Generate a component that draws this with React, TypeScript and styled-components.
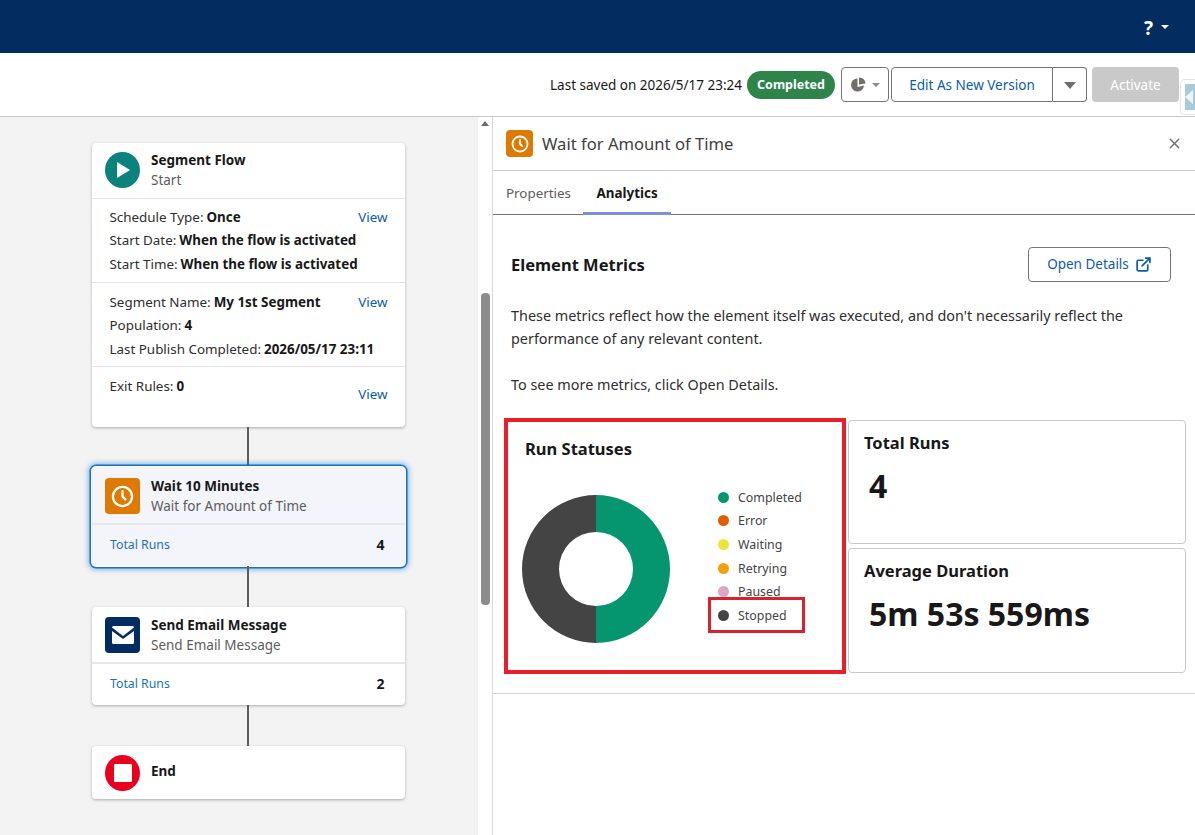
import React from 'react'
import styled, { createGlobalStyle } from 'styled-components'
import { X, ExternalLink } from 'lucide-react'

const Global = createGlobalStyle`
  html, body { margin: 0; padding: 0; background: #fff; }
  body { font-family: "Noto Sans", "Open Sans", Arial, sans-serif; color: #181818; overflow: hidden; }
  *, *::before, *::after { box-sizing: border-box; }
`

const Page = styled.div`
  width: 1195px;
  height: 835px;
  display: flex;
  flex-direction: column;
  overflow: hidden;
  position: relative;
`

const TopBar = styled.div`
  height: 53px;
  background: #032d60;
  display: flex;
  align-items: center;
  justify-content: flex-end;
  padding-right: 26px;
  gap: 8px;
  color: #fff;
`
const Help = styled.span`
  font-size: 19px;
  font-weight: 700;
  margin-top: 3px;
`
const SmallCaret = styled.span<{ $color?: string }>`
  width: 0;
  height: 0;
  border-left: 4px solid transparent;
  border-right: 4px solid transparent;
  border-top: 4px solid ${p => p.$color || '#fff'};
`

const Toolbar = styled.div`
  height: 64px;
  border-bottom: 1px solid #c9c9c9;
  display: flex;
  align-items: center;
  justify-content: flex-end;
  padding: 0 16px 0 0;
`
const Saved = styled.span`
  font-size: 13.5px;
  margin-right: 5px;
  white-space: nowrap;
`
const Badge = styled.span`
  width: 88px;
  height: 28px;
  border-radius: 14px;
  background: #2e844a;
  color: #fff;
  font-size: 12.5px;
  font-weight: 700;
  display: flex;
  align-items: center;
  justify-content: center;
  margin-right: 6px;
`
const OutlineButton = styled.button<{ $w: number; $joinRight?: boolean; $joinLeft?: boolean }>`
  width: ${p => p.$w}px;
  height: 35px;
  background: #fff;
  border: 1px solid #747474;
  border-radius: ${p => (p.$joinRight ? '4px 0 0 4px' : p.$joinLeft ? '0 4px 4px 0' : '4px')};
  ${p => p.$joinLeft && 'border-left: 0;'}
  color: #0b5cab;
  font-family: inherit;
  font-size: 13.5px;
  display: flex;
  align-items: center;
  justify-content: center;
  gap: 6px;
  padding: 0;
`
const ButtonGroup = styled.div`
  display: flex;
  margin: 0 5px 0 2px;
`
const BigCaret = styled.span`
  width: 0;
  height: 0;
  border-left: 6px solid transparent;
  border-right: 6px solid transparent;
  border-top: 7px solid #706e6b;
  margin-top: 2px;
`
const ActivateButton = styled.button`
  width: 87px;
  height: 35px;
  background: #c9c9c9;
  border: 0;
  border-radius: 4px;
  color: #fff;
  font-family: inherit;
  font-size: 13.5px;
  padding: 0;
`
const EdgeHandle = styled.div`
  position: absolute;
  top: 79px;
  right: 0;
  width: 15px;
  height: 36px;
  background: #fff;
  border: 1px solid #e5e5e5;
  border-right: 0;
  border-radius: 5px 0 0 5px;
  padding: 4px 0 4px 4px;
`

const Body = styled.div`
  flex: 1;
  display: flex;
  min-height: 0;
`
const Canvas = styled.div`
  width: 478px;
  background: #f3f3f3;
  padding: 26px 0 0 92px;
  display: flex;
  flex-direction: column;
`
const Card = styled.div<{ $selected?: boolean }>`
  width: 312.5px;
  background: ${p => (p.$selected ? '#f3f5fb' : '#fff')};
  border-radius: 4px;
  box-shadow: ${p =>
    p.$selected
      ? '0 0 0 1px #fff, 0 0 0 2.5px #1b6fc0, 0 0 5px 4px rgba(30,140,230,.5)'
      : '0 1px 3px rgba(0,0,0,.3)'};
`
const CardHead = styled.div<{ $h: number; $pad: number }>`
  display: flex;
  gap: 11px;
  padding: ${p => p.$pad}px 13px 0;
  height: ${p => p.$h}px;
`
const NodeIcon = styled.div<{ $bg: string; $round?: boolean }>`
  width: 35px;
  height: 36px;
  border-radius: ${p => (p.$round ? '50%' : '4px')};
  background: ${p => p.$bg};
  display: flex;
  align-items: center;
  justify-content: center;
  flex: none;
`
const HeadText = styled.div<{ $single?: boolean }>`
  display: flex;
  flex-direction: column;
  gap: 2px;
  margin-top: ${p => (p.$single ? 7 : -1)}px;
`
const NodeTitle = styled.div`
  font-size: 13.5px;
  font-weight: 700;
  line-height: 18px;
  white-space: nowrap;
`
const NodeSub = styled.div`
  font-size: 13.5px;
  line-height: 18px;
  color: #5c5c5c;
  white-space: nowrap;
`
const Section = styled.div<{ $h: number; $pad: number }>`
  border-top: 1px solid #e5e5e5;
  height: ${p => p.$h}px;
  padding: ${p => p.$pad}px 17px 0 17.5px;
  display: flex;
  justify-content: space-between;
`
const Lines = styled.div`
  flex: 1;
  min-width: 0;
  display: flex;
  flex-direction: column;
  gap: 5.5px;
`
const Line = styled.div`
  font-size: 13.4px;
  line-height: 18px;
  color: #2e2e2e;
  white-space: nowrap;
  b {
    color: #181818;
    margin-left: 3px;
  }
`
const ViewLink = styled.a<{ $offset?: number }>`
  flex: none;
  font-size: 13.4px;
  line-height: 18px;
  color: #0b5cab;
  margin-top: ${p => p.$offset || 0}px;
`
const Connector = styled.div<{ $h: number }>`
  width: 2px;
  height: ${p => p.$h}px;
  background: #5c5c5c;
  margin-left: 155px;
`
const RunsRow = styled.div`
  border-top: 2px solid #e8e8e8;
  height: 43px;
  padding: 0 20px 2px 18px;
  display: flex;
  align-items: center;
  justify-content: space-between;
`
const RunsLink = styled.a`
  font-size: 12.3px;
  color: #1b72b8;
`
const RunsCount = styled.b`
  font-size: 14px;
`

const ScrollTrack = styled.div`
  width: 14px;
  background: #fff;
  padding: 4px 3px 0;
  display: flex;
  flex-direction: column;
  align-items: center;
`
const ScrollUp = styled.span`
  width: 0;
  height: 0;
  border-left: 4px solid transparent;
  border-right: 4px solid transparent;
  border-bottom: 5px solid #6b6b6b;
  margin-bottom: 167px;
`
const ScrollThumb = styled.div`
  width: 9px;
  height: 312px;
  background: #8c8c8c;
  border-radius: 4px;
  flex: none;
`

const Panel = styled.div`
  flex: 1;
  border-left: 1px solid #d8d8d8;
  display: flex;
  flex-direction: column;
`
const PanelHead = styled.div`
  height: 54px;
  border-bottom: 1px solid #c9c9c9;
  display: flex;
  align-items: center;
  padding: 0 12px 0 13px;
  gap: 9px;
`
const PanelIcon = styled.div`
  width: 27px;
  height: 27px;
  border-radius: 4px;
  background: #dd7a01;
  display: flex;
  align-items: center;
  justify-content: center;
`
const PanelTitle = styled.h2`
  flex: 1;
  margin: 0;
  font-size: 16.6px;
  font-weight: 400;
  color: #3e3e3c;
`
const Tabs = styled.div`
  height: 44px;
  border-bottom: 1px solid #747474;
  display: flex;
  padding-left: 1px;
`
const Tab = styled.div<{ $active?: boolean }>`
  height: 44px;
  padding: 0 ${p => (p.$active ? 13.5 : 12)}px;
  display: flex;
  align-items: center;
  font-size: 13.4px;
  font-weight: ${p => (p.$active ? 700 : 400)};
  color: ${p => (p.$active ? '#181818' : '#5c5c5c')};
  border-top: 3px solid transparent;
  border-bottom: ${p => (p.$active ? '3px solid #7f8de1' : '3px solid transparent')};
`
const Content = styled.div`
  padding: 32px 9px 0 12px;
  height: 479px;
  border-bottom: 1px solid #d0d0d0;
  display: flex;
  flex-direction: column;
`
const MetricsHead = styled.div`
  display: flex;
  justify-content: space-between;
  align-items: center;
  padding: 0 15px 0 6px;
  height: 34px;
  margin-bottom: 23px;
`
const MetricsTitle = styled.h3`
  margin: 0;
  font-size: 16.5px;
  font-weight: 700;
`
const Paragraph = styled.p`
  margin: 0 0 24px;
  padding: 0 6px;
  font-size: 14.4px;
  line-height: 23px;
  color: #2e2e2e;
`
const Grid = styled.div`
  display: grid;
  grid-template-columns: 342px 338px;
  grid-template-rows: 124px 125px;
  gap: 4px 2px;
  margin-left: -1px;
`
const StatusCard = styled.div`
  grid-row: 1 / 3;
  border: 4px solid #e81e2a;
  margin-top: -2px;
  height: 256px;
  padding: 16px 17px 0;
`
const CardTitle = styled.div`
  font-size: 16.5px;
  font-weight: 700;
  line-height: 22px;
`
const MetricCard = styled.div`
  border: 1px solid #c9c9c9;
  border-radius: 4px;
  padding: 11px 15px 0;
`
const MetricValue = styled.div`
  font-size: 32px;
  font-weight: 700;
  line-height: 40px;
  margin: 12px 0 0 5px;
  white-space: nowrap;
`
const ChartRow = styled.div`
  display: flex;
  margin-top: 35px;
  margin-left: -3px;
`
const Donut = styled.svg`
  width: 148px;
  height: 148px;
  flex: none;
`
const Legend = styled.div`
  margin-left: 48px;
  margin-top: -9.5px;
  display: flex;
  flex-direction: column;
  position: relative;
`
const LegendRow = styled.div<{ $mark?: boolean }>`
  height: 23.6px;
  display: flex;
  align-items: center;
  gap: 9px;
  font-size: 12.4px;
  color: #444;
  position: relative;
  ${p =>
    p.$mark &&
    `&::after {
      content: '';
      position: absolute;
      left: -10px;
      top: -6px;
      width: 97px;
      height: 36px;
      border: 3.5px solid #d8232f;
    }`}
`
const Dot = styled.span<{ $c: string }>`
  width: 11px;
  height: 11px;
  border-radius: 50%;
  background: ${p => p.$c};
  flex: none;
`

const legend = [
  { label: 'Completed', color: '#06966f' },
  { label: 'Error', color: '#dd5f00' },
  { label: 'Waiting', color: '#eee43e' },
  { label: 'Retrying', color: '#f59e0b' },
  { label: 'Paused', color: '#dba8c2' },
  { label: 'Stopped', color: '#444444' },
]

const ClockIcon = ({ size }: { size: number }) => (
  <svg width={size} height={size} viewBox="0 0 24 24" fill="none" stroke="#fff" strokeWidth="2.4" strokeLinecap="round">
    <circle cx="12" cy="12" r="10" />
    <path d="M12 6.5V12l3 3" />
  </svg>
)

const App = () => (
  <Page>
    <Global />
    <TopBar>
      <Help>?</Help>
      <SmallCaret />
    </TopBar>
    <Toolbar>
      <Saved>Last saved on 2026/5/17 23:24</Saved>
      <Badge>Completed</Badge>
      <OutlineButton $w={48}>
        <svg width="15" height="15" viewBox="0 0 15 15" fill="#706e6b">
          <path d="M6.500 1.500A6.500 6.500 0 1 0 13 8.500L6.500 10z" />
          <path d="M8 0.500A6 6 0 0 1 14.500 6.500L8 7.500z" />
        </svg>
        <SmallCaret $color="#8a8a8a" />
      </OutlineButton>
      <ButtonGroup>
        <OutlineButton $w={162} $joinRight>Edit As New Version</OutlineButton>
        <OutlineButton $w={34} $joinLeft><BigCaret /></OutlineButton>
      </ButtonGroup>
      <ActivateButton>Activate</ActivateButton>
    </Toolbar>
    <EdgeHandle>
      <svg width="11" height="26" viewBox="0 0 11 26">
        <rect width="11" height="26" fill="#a8cbdc" />
        <path d="M0 13l8-7v14z" fill="#eef4f8" />
      </svg>
    </EdgeHandle>
    <Body>
      <Canvas>
        <Card>
          <CardHead $h={55} $pad={9}>
            <NodeIcon $bg="#0b827c" $round>
              <svg width="18" height="20" viewBox="0 0 18 20"><path d="M3 2l13 8-13 8z" fill="#fff" /></svg>
            </NodeIcon>
            <HeadText>
              <NodeTitle>Segment Flow</NodeTitle>
              <NodeSub>Start</NodeSub>
            </HeadText>
          </CardHead>
          <Section $h={84} $pad={8.5}>
            <Lines>
              <Line>Schedule Type:<b>Once</b></Line>
              <Line>Start Date:<b>When the flow is activated</b></Line>
              <Line>Start Time:<b>When the flow is activated</b></Line>
            </Lines>
            <ViewLink>View</ViewLink>
          </Section>
          <Section $h={84} $pad={9.5}>
            <Lines>
              <Line>Segment Name:<b>My 1st Segment</b></Line>
              <Line>Population:<b>4</b></Line>
              <Line>Last Publish Completed:<b>2026/05/17 23:11</b></Line>
            </Lines>
            <ViewLink>View</ViewLink>
          </Section>
          <Section $h={61} $pad={9.5}>
            <Lines>
              <Line>Exit Rules:<b>0</b></Line>
            </Lines>
            <ViewLink $offset={8}>View</ViewLink>
          </Section>
        </Card>
        <Connector $h={40} />
        <Card $selected>
          <CardHead $h={56} $pad={11}>
            <NodeIcon $bg="#dd7a01"><ClockIcon size={23} /></NodeIcon>
            <HeadText>
              <NodeTitle>Wait 10 Minutes</NodeTitle>
              <NodeSub>Wait for Amount of Time</NodeSub>
            </HeadText>
          </CardHead>
          <RunsRow>
            <RunsLink>Total Runs</RunsLink>
            <RunsCount>4</RunsCount>
          </RunsRow>
        </Card>
        <Connector $h={41} />
        <Card>
          <CardHead $h={55} $pad={10}>
            <NodeIcon $bg="#032d60">
              <svg width="24" height="18" viewBox="0 0 24 18">
                <path d="M1 1.500A1.500 1.500 0 0 1 2.500 0h19A1.500 1.500 0 0 1 23 1.500L12 10z" fill="#fff" />
                <path d="M1 5l11 8 11-8v11.500A1.500 1.500 0 0 1 21.500 18h-19A1.500 1.500 0 0 1 1 16.500z" fill="#fff" />
              </svg>
            </NodeIcon>
            <HeadText>
              <NodeTitle>Send Email Message</NodeTitle>
              <NodeSub>Send Email Message</NodeSub>
            </HeadText>
          </CardHead>
          <RunsRow>
            <RunsLink>Total Runs</RunsLink>
            <RunsCount>2</RunsCount>
          </RunsRow>
        </Card>
        <Connector $h={41} />
        <Card>
          <CardHead $h={53} $pad={9}>
            <NodeIcon $bg="#ea001e" $round>
              <svg width="18" height="18" viewBox="0 0 18 18"><rect width="18" height="18" rx="1" fill="#fff" /></svg>
            </NodeIcon>
            <HeadText $single>
              <NodeTitle>End</NodeTitle>
            </HeadText>
          </CardHead>
        </Card>
      </Canvas>
      <ScrollTrack>
        <ScrollUp />
        <ScrollThumb />
      </ScrollTrack>
      <Panel>
        <PanelHead>
          <PanelIcon><ClockIcon size={18} /></PanelIcon>
          <PanelTitle>Wait for Amount of Time</PanelTitle>
          <X size={17} color="#706e6b" />
        </PanelHead>
        <Tabs>
          <Tab>Properties</Tab>
          <Tab $active>Analytics</Tab>
        </Tabs>
        <Content>
          <MetricsHead>
            <MetricsTitle>Element Metrics</MetricsTitle>
            <OutlineButton $w={143}>
              Open Details
              <ExternalLink size={17} strokeWidth={2.4} />
            </OutlineButton>
          </MetricsHead>
          <Paragraph>
            These metrics reflect how the element itself was executed, and don't necessarily reflect the performance of any relevant content.
            <br /><br />
            To see more metrics, click Open Details.
          </Paragraph>
          <Grid>
            <StatusCard>
              <CardTitle>Run Statuses</CardTitle>
              <ChartRow>
                <Donut viewBox="0 0 148 148">
                  <path d="M74 0a74 74 0 0 1 0 148v-37a37 37 0 0 0 0-74z" fill="#06966f" />
                  <path d="M74 0a74 74 0 0 0 0 148v-37a37 37 0 0 1 0-74z" fill="#444444" />
                </Donut>
                <Legend>
                  {legend.map(l => (
                    <LegendRow key={l.label} $mark={l.label === 'Stopped'}>
                      <Dot $c={l.color} />
                      {l.label}
                    </LegendRow>
                  ))}
                </Legend>
              </ChartRow>
            </StatusCard>
            <MetricCard>
              <CardTitle>Total Runs</CardTitle>
              <MetricValue>4</MetricValue>
            </MetricCard>
            <MetricCard>
              <CardTitle>Average Duration</CardTitle>
              <MetricValue>5m 53s 559ms</MetricValue>
            </MetricCard>
          </Grid>
        </Content>
      </Panel>
    </Body>
  </Page>
)

export default App
